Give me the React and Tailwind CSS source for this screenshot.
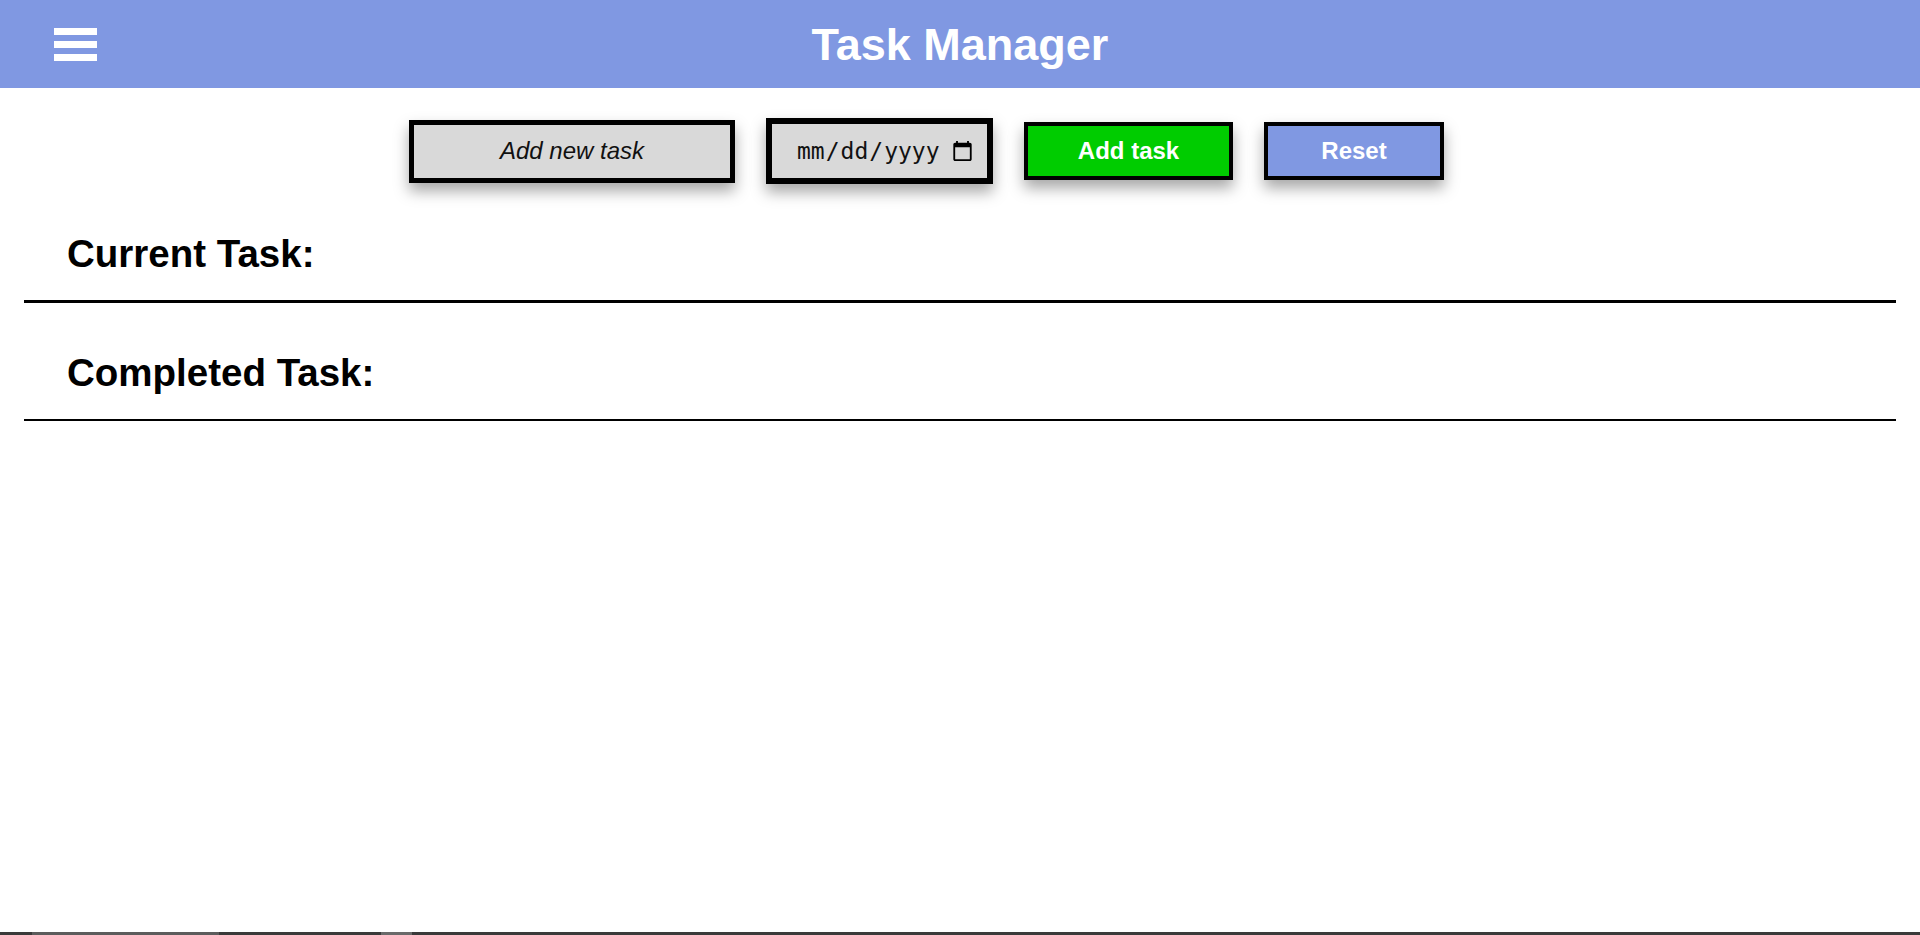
import React from "react";

export default function App() {
  return (
    <div className="h-[935px] w-full flex flex-col bg-white font-['Liberation_Sans',Arial,sans-serif] text-black overflow-hidden">
      <header className="h-[88px] shrink-0 bg-[#8098e2] grid grid-cols-[1fr_auto_1fr] items-center">
        <div className="pl-[54px] flex">
          <div className="flex flex-col gap-[6px] w-[43px]">
            <span className="block h-[7px] bg-white"></span>
            <span className="block h-[7px] bg-white"></span>
            <span className="block h-[7px] bg-white"></span>
          </div>
        </div>
        <h1 className="text-[45px] font-bold text-white leading-none">Task Manager</h1>
        <div></div>
      </header>

      <main className="flex-1 flex flex-col">
        <div className="pt-[30px] h-[96px] flex items-center justify-center gap-[31px] pr-[67px]">
          <input
            type="text"
            placeholder="Add new task"
            className="w-[326px] h-[63px] border-[5px] border-black bg-[#d9d9d9] text-center italic text-[24px] placeholder:text-[#111] placeholder:italic outline-none shadow-[0_8px_14px_rgba(0,0,0,0.35)]"
          />
          <input
            type="date"
            className="w-[227px] h-[66px] border-[6px] border-black bg-[#d9d9d9] pl-[24px] pr-[11px] text-[23px] font-['DejaVu_Sans_Mono',monospace] text-[#111] outline-none shadow-[0_8px_14px_rgba(0,0,0,0.35)]"
          />
          <button className="w-[209px] h-[58px] border-[4px] border-black bg-[#00cc00] text-white font-bold text-[24px] shadow-[0_8px_14px_rgba(0,0,0,0.35)]">
            Add task
          </button>
          <button className="w-[180px] h-[58px] border-[4px] border-black bg-[#8098e2] text-white font-bold text-[24px] shadow-[0_8px_14px_rgba(0,0,0,0.35)]">
            Reset
          </button>
        </div>

        <section className="mx-[24px] mt-[49px] border-b-[3px] border-black pb-[25px]">
          <h2 className="pl-[43px] text-[38.5px] font-bold leading-[42px]">Current Task:</h2>
        </section>

        <section className="mx-[24px] mt-[49px] border-b-[2px] border-black pb-[25px]">
          <h2 className="pl-[43px] text-[38.5px] font-bold leading-[42px]">Completed Task:</h2>
        </section>
      </main>

      <div className="h-[3px] shrink-0 bg-[#3a3a3a] flex">
        <span className="ml-[32px] w-[187px] bg-[#5c5c5c]"></span>
        <span className="ml-[162px] w-[31px] bg-[#6a6a6a]"></span>
      </div>
    </div>
  );
}
